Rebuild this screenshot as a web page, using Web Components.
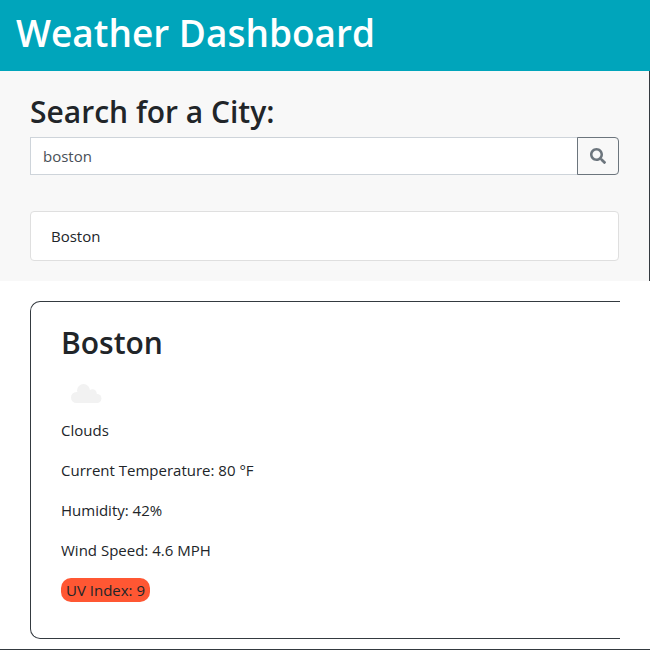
<!DOCTYPE html>
<html lang="en">
<head>
<meta charset="utf-8">
<meta name="viewport" content="width=device-width, initial-scale=1">
<title>Weather Dashboard</title>
<style>
  body {
    margin: 0;
    background: #fff;
    color: #212529;
    font: 400 15px/24px "Open Sans", "Noto Sans", sans-serif;
    --line: #343a40;
  }
</style>
</head>
<body>
<dashboard-header>Weather Dashboard</dashboard-header>
<main>
  <city-search value="boston">
    <city-item>Boston</city-item>
  </city-search>
  <weather-card city="Boston">
    <weather-line>Clouds</weather-line>
    <weather-line>Current Temperature: 80 °F</weather-line>
    <weather-line>Humidity: 42%</weather-line>
    <weather-line>Wind Speed: 4.6 MPH</weather-line>
    <weather-line><uv-badge>UV Index: 9</uv-badge></weather-line>
  </weather-card>
</main>
<script>
const define = (name, html, setup) => {
  const template = document.createElement('template');
  template.innerHTML = html;
  customElements.define(name, class extends HTMLElement {
    constructor() {
      super();
      this.attachShadow({ mode: 'open' }).append(template.content.cloneNode(true));
    }
    connectedCallback() {
      if (setup) setup(this, this.shadowRoot);
    }
  });
};

define('dashboard-header', `
  <style>
    :host { display: block; background: #00a5bb; color: #fff; padding: 9px 16px 14px; }
    h1 { margin: 0; font-size: 37px; line-height: 48px; font-weight: 600; }
  </style>
  <header><h1><slot></slot></h1></header>`);

define('city-search', `
  <style>
    :host {
      display: block; box-sizing: border-box; background: #f8f8f8;
      border-right: 1px solid var(--line); padding: 20px 30px;
    }
    label { display: block; margin-bottom: 4px; font-size: 30px; line-height: 42px; font-weight: 600; }
    h2 { margin: 0; font: inherit; }
    form { display: flex; margin-bottom: 36px; }
    input {
      flex: 1; min-width: 0; box-sizing: border-box; height: 38px; margin: 0; padding: 6px 12px;
      border: 1px solid #ced4da; border-radius: 0; background: #fff; color: #495057;
      font: inherit; outline: 0;
    }
    button {
      display: flex; align-items: center; justify-content: center; box-sizing: border-box;
      width: 42px; height: 38px; margin: 0 0 0 -1px; padding: 0; z-index: 1;
      border: 1px solid #6c757d; border-radius: 0 4px 4px 0; background: transparent; color: #6c757d;
    }
    svg { width: 16px; height: 16px; fill: currentColor; }
  </style>
  <section>
    <h2><label for="city">Search for a City:</label></h2>
    <form>
      <input id="city" type="text">
      <button type="button" aria-label="Search">
        <svg viewBox="0 0 512 512" aria-hidden="true"><path d="M505 442.700L405.300 343c-4.500-4.500-10.600-7-17-7H372c27.600-35.300 44-79.700 44-128C416 93.100 322.900 0 208 0S0 93.100 0 208s93.100 208 208 208c48.300 0 92.700-16.400 128-44v16.300c0 6.400 2.500 12.500 7 17l99.700 99.700c9.400 9.400 24.600 9.400 33.900 0l28.300-28.300c9.400-9.400 9.400-24.600.1-34zM208 336c-70.700 0-128-57.200-128-128 0-70.700 57.200-128 128-128 70.700 0 128 57.200 128 128 0 70.700-57.200 128-128 128z"/></svg>
      </button>
    </form>
    <div role="list"><slot></slot></div>
  </section>`,
  (host, root) => { root.querySelector('input').value = host.getAttribute('value') || ''; });

define('city-item', `
  <style>
    :host {
      display: block; padding: 12px 20px; background: #fff;
      border: 1px solid #dfdfdf; border-radius: 4px;
    }
  </style>
  <div role="listitem"><slot></slot></div>`);

define('weather-card', `
  <style>
    :host { display: block; padding: 20px 30px 10px; border-bottom: 1px solid var(--line); }
    article {
      padding: 20px 30px; border: 1px solid var(--line); border-right: 0;
      border-radius: 10px 0 0 10px;
    }
    h2 { margin: 0 0 4px; font-size: 30px; line-height: 42px; font-weight: 600; }
    svg { display: block; width: 50px; height: 50px; fill: #f2f2f2; }
  </style>
  <article>
    <h2></h2>
    <svg viewBox="0 0 50 50" role="img" aria-label="Clouds">
      <circle cx="15.500" cy="29.500" r="5.500"/>
      <circle cx="22.500" cy="22.500" r="6.500"/>
      <circle cx="31.500" cy="25.500" r="4.200"/>
      <circle cx="36" cy="30.500" r="4.500"/>
      <path d="M15.500 24H31L36 26V35H15.500Z"/>
    </svg>
    <slot></slot>
  </article>`,
  (host, root) => { root.querySelector('h2').textContent = host.getAttribute('city'); });

define('weather-line', `
  <style>
    :host { display: block; margin-bottom: 16px; }
    p { margin: 0; }
  </style>
  <p><slot></slot></p>`);

define('uv-badge', `
  <style>
    :host { display: inline-block; vertical-align: top; padding: 0 5px; border-radius: 10px; background: #ff5733; }
  </style>
  <slot></slot>`);
</script>
</body>
</html>
